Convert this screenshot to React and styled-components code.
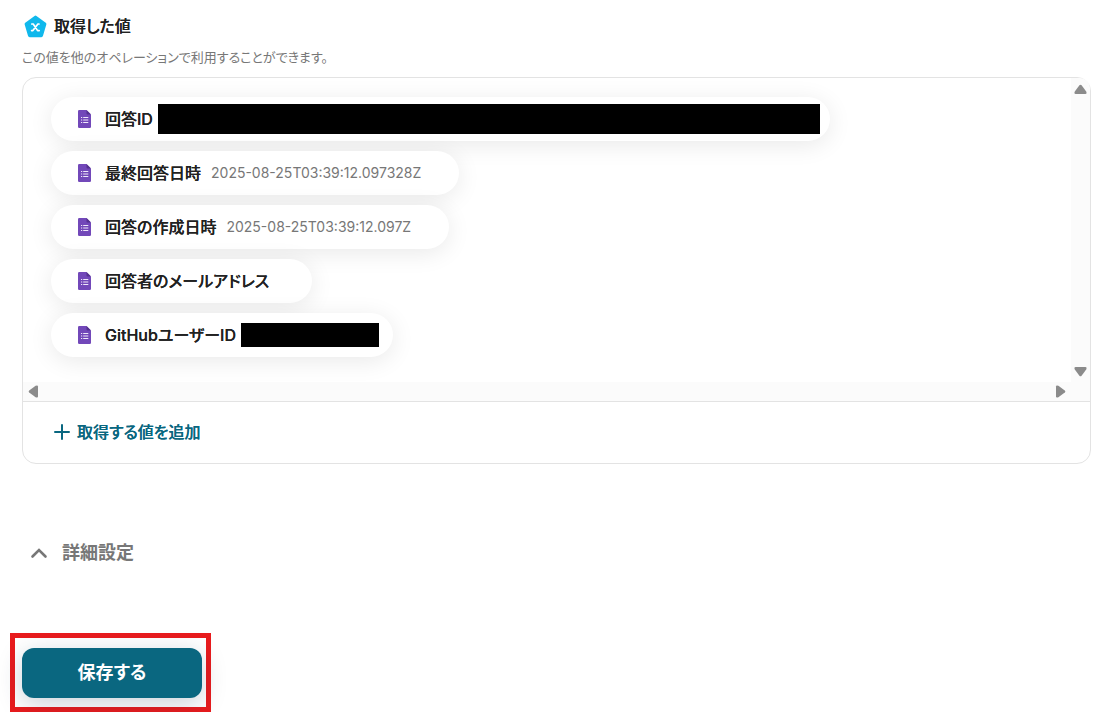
import React from "react";
import styled, { createGlobalStyle } from "styled-components";

const GlobalStyle = createGlobalStyle`
  *, *::before, *::after { box-sizing: border-box; }
  body {
    margin: 0;
    background: #fff;
    color: #222;
    font-family: Inter, "Noto Sans CJK JP", sans-serif;
    font-feature-settings: "palt";
    font-size: 16px;
  }
  h2, p, ul { margin: 0; padding: 0; }
  button { font: inherit; font-feature-settings: inherit; cursor: pointer; }
`;

const Page = styled.main`
  padding: 14px 21px 0 22px;
`;

const Heading = styled.h2`
  display: flex;
  align-items: center;
  gap: 7px;
  height: 24px;
  padding-left: 2px;
  font-size: 16px;
  line-height: 24px;
  font-weight: 500;
  text-shadow: 0 0 0 currentColor;
`;

const Note = styled.p`
  margin-top: 9px;
  font-size: 13px;
  line-height: 20px;
  color: #777;
`;

const Panel = styled.section`
  margin-top: 10px;
  border: 1px solid #e3e3e3;
  border-radius: 14px;
`;

const ScrollArea = styled.div`
  display: grid;
  grid-template-columns: minmax(0, 1fr) 19px;
  grid-template-rows: 304px 19px;
  border-bottom: 1px solid #e3e3e3;
`;

const Values = styled.ul`
  display: flex;
  flex-direction: column;
  align-items: flex-start;
  gap: 10px;
  padding: 19px 28px;
  overflow: hidden;
  border-top-left-radius: 13px;
  list-style: none;
`;

const Pill = styled.li`
  display: flex;
  align-items: center;
  height: 44px;
  padding: 0 ${(p) => p.$end}px 0 27px;
  border-radius: 22px;
  background: #fff;
  box-shadow: 0 4px 24px rgba(0, 0, 0, 0.09);
  white-space: nowrap;
`;

const Name = styled.span`
  margin-left: 14px;
  line-height: 24px;
  font-weight: 500;
  text-shadow: 0 0 0 currentColor;
`;

const Stamp = styled.span`
  margin-left: 10px;
  font-size: 14px;
  line-height: 24px;
  color: #777;
`;

const Mask = styled.span`
  width: ${(p) => p.$width}px;
  height: ${(p) => p.$height}px;
  margin-left: ${(p) => p.$gap}px;
  background: #000;
`;

const Track = styled.div`
  display: flex;
  flex-direction: ${(p) => (p.$vertical ? "column" : "row")};
  justify-content: space-between;
  align-items: center;
  padding: ${(p) => (p.$vertical ? "5px 0 4px" : "0 4px")};
  background: #fbfbfb;
  border-top-right-radius: ${(p) => (p.$vertical ? "10px" : "0")};
`;

const Corner = styled.div`
  background: #fbfbfb;
`;

const Arrow = styled.svg`
  display: block;
  width: 13px;
  height: 13px;
  fill: #8b8b8b;
  transform: rotate(${(p) => p.$turn}deg);
`;

const PanelFooter = styled.div`
  display: flex;
  align-items: center;
  height: 61px;
  padding: 0 31px 2px;
`;

const AddButton = styled.button`
  display: flex;
  align-items: center;
  gap: 7px;
  padding: 0;
  border: 0;
  background: none;
  color: #0a6780;
  font-weight: 500;
  line-height: 24px;
  text-shadow: 0 0 0 currentColor;
`;

const Disclosure = styled.button`
  display: flex;
  align-items: center;
  gap: 14px;
  margin-top: 75px;
  padding: 0 0 0 8px;
  border: 0;
  background: none;
  color: #777;
  font-size: 18px;
  line-height: 28px;
  font-weight: 700;
`;

const Highlight = styled.div`
  width: fit-content;
  margin: 66px 0 0 -12px;
  padding: 10px 4px 9px 7px;
  border: 5px solid #e81b1d;
`;

const SaveButton = styled.button`
  display: block;
  width: 180px;
  height: 50px;
  padding: 0 0 4px;
  border: 0;
  border-radius: 12px;
  background: #0a6780;
  color: #fff;
  font-size: 18px;
  font-weight: 700;
  box-shadow: 0 6px 24px rgba(20, 50, 80, 0.22);
`;

const VariableIcon = () => (
  <svg width="23" height="23" viewBox="0 0 23 23" aria-hidden="true">
    <path
      d="M11.5 2.2 L20.8 9.1 L17.4 20.6 H5.6 L2.2 9.1 Z"
      fill="#10b8ec"
      stroke="#10b8ec"
      strokeWidth="3.2"
      strokeLinejoin="round"
    />
    <path
      d="M7.8 9 H9.2 L13.6 15.6 H15.2 M15 9 H13.9 L8.9 15.6 H7.6"
      fill="none"
      stroke="#fff"
      strokeWidth="1.7"
      strokeLinecap="round"
      strokeLinejoin="round"
    />
  </svg>
);

const FormIcon = () => (
  <svg width="13" height="18" viewBox="0 0 13 18" aria-hidden="true">
    <path d="M1.2 0 H8.5 L13 4.5 V16.8 Q13 18 11.8 18 H1.2 Q0 18 0 16.8 V1.2 Q0 0 1.2 0 Z" fill="#7248b9" />
    <path d="M8.5 0 L13 4.5 H9.5 Q8.5 4.5 8.5 3.5 Z" fill="#54318f" />
    <path
      d="M3 7.5 H4.2 M5.2 7.5 H10.3 M3 10 H4.2 M5.2 10 H10.3 M3 12.5 H4.2 M5.2 12.5 H10.3"
      stroke="#efe8fa"
      strokeWidth="1.1"
    />
  </svg>
);

const ScrollArrow = ({ turn }) => (
  <Arrow viewBox="0 0 13 13" $turn={turn} aria-hidden="true">
    <path d="M5.4 2.2 Q6.5 1.2 7.6 2.2 L12.2 8.6 Q13.2 11 11.4 11 H1.6 Q-0.2 11 0.8 8.6 Z" />
  </Arrow>
);

const values = [
  { name: "回答ID", end: 10, mask: { width: 662, height: 30, gap: 5 } },
  { name: "最終回答日時", end: 38, stamp: "2025-08-25T03:39:12.097328Z" },
  { name: "回答の作成日時", end: 38, stamp: "2025-08-25T03:39:12.097Z" },
  { name: "回答者のメールアドレス", end: 43 },
  { name: "GitHubユーザーID", end: 14, mask: { width: 138, height: 24, gap: 5 } },
];

export default function App() {
  return (
    <>
      <GlobalStyle />
      <Page>
        <Heading>
          <VariableIcon />
          取得した値
        </Heading>
        <Note>この値を他のオペレーションで利用することができます。</Note>
        <Panel>
          <ScrollArea>
            <Values>
              {values.map((v) => (
                <Pill key={v.name} $end={v.end}>
                  <FormIcon />
                  <Name>{v.name}</Name>
                  {v.stamp && <Stamp>{v.stamp}</Stamp>}
                  {v.mask && <Mask $width={v.mask.width} $height={v.mask.height} $gap={v.mask.gap} />}
                </Pill>
              ))}
            </Values>
            <Track $vertical>
              <ScrollArrow turn={0} />
              <ScrollArrow turn={180} />
            </Track>
            <Track>
              <ScrollArrow turn={-90} />
              <ScrollArrow turn={90} />
            </Track>
            <Corner />
          </ScrollArea>
          <PanelFooter>
            <AddButton type="button">
              <svg width="16" height="16" viewBox="0 0 16 16" aria-hidden="true">
                <path d="M8 1 V15 M1 8 H15" stroke="currentColor" strokeWidth="2" strokeLinecap="round" />
              </svg>
              取得する値を追加
            </AddButton>
          </PanelFooter>
        </Panel>
        <Disclosure type="button" aria-expanded="true">
          <svg width="18" height="12" viewBox="0 0 18 12" aria-hidden="true">
            <path d="M2.5 9.5 L9 3 L15.5 9.5" fill="none" stroke="currentColor" strokeWidth="2.6" strokeLinecap="round" />
          </svg>
          詳細設定
        </Disclosure>
        <Highlight>
          <SaveButton type="button">保存する</SaveButton>
        </Highlight>
      </Page>
    </>
  );
}
